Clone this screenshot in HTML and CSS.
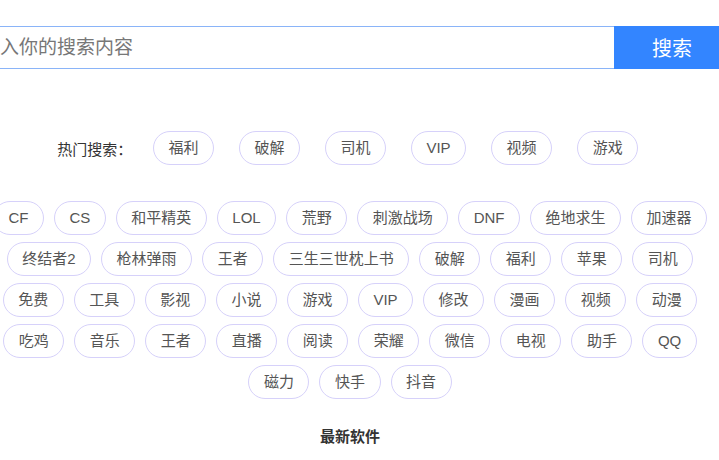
FILE: index.html
```html
<!DOCTYPE html>
<html lang="zh-CN">
<head>
    <meta charset="UTF-8">
    <meta name="viewport" content="width=device-width, initial-scale=1.0">
    <title>搜索</title>
    <link rel="stylesheet" href="styles.css">
</head>
<body>
    <div class="page">
        <form class="search" onsubmit="return false">
            <input type="text" class="search-input" placeholder="请输入你的搜索内容">
            <button type="submit" class="search-btn">搜索</button>
        </form>

        <div class="hot">
            <span class="hot-label">热门搜索：</span>
            <a class="tag hot-tag">福利</a>
            <a class="tag hot-tag">破解</a>
            <a class="tag hot-tag">司机</a>
            <a class="tag hot-tag">VIP</a>
            <a class="tag hot-tag">视频</a>
            <a class="tag hot-tag">游戏</a>
        </div>

        <div class="tags">
            <a class="tag">CF</a>
            <a class="tag">CS</a>
            <a class="tag">和平精英</a>
            <a class="tag">LOL</a>
            <a class="tag">荒野</a>
            <a class="tag">刺激战场</a>
            <a class="tag">DNF</a>
            <a class="tag">绝地求生</a>
            <a class="tag">加速器</a>
            <a class="tag">终结者2</a>
            <a class="tag">枪林弹雨</a>
            <a class="tag">王者</a>
            <a class="tag">三生三世枕上书</a>
            <a class="tag">破解</a>
            <a class="tag">福利</a>
            <a class="tag">苹果</a>
            <a class="tag">司机</a>
            <a class="tag">免费</a>
            <a class="tag">工具</a>
            <a class="tag">影视</a>
            <a class="tag">小说</a>
            <a class="tag">游戏</a>
            <a class="tag">VIP</a>
            <a class="tag">修改</a>
            <a class="tag">漫画</a>
            <a class="tag">视频</a>
            <a class="tag">动漫</a>
            <a class="tag">吃鸡</a>
            <a class="tag">音乐</a>
            <a class="tag">王者</a>
            <a class="tag">直播</a>
            <a class="tag">阅读</a>
            <a class="tag">荣耀</a>
            <a class="tag">微信</a>
            <a class="tag">电视</a>
            <a class="tag">助手</a>
            <a class="tag">QQ</a>
            <a class="tag">磁力</a>
            <a class="tag">快手</a>
            <a class="tag">抖音</a>
        </div>

        <h3 class="section-title">最新软件</h3>
    </div>
</body>
</html>
```

FILE: styles.css
```css
body {
    margin: 0;
    overflow: hidden;
    background-color: #fff;
    font-family: "Liberation Sans", "Noto Sans CJK SC", sans-serif;
    color: #333;
}
.page {
    width: 700px;
    display: flex;
    flex-direction: column;
    align-items: center;
}

/* search bar is wider than the window */
.search {
    display: flex;
    width: 782px;
    height: 43px;
    margin: 26px 22px 0 0;
}
.search-input {
    flex: 1;
    box-sizing: border-box;
    height: 43px;
    padding: 0 13px;
    border: 1px solid #8ab4f8;
    border-right: none;
    outline: none;
    font-family: inherit;
    font-size: 19px;
    color: #333;
}
.search-input::placeholder {
    color: #777;
}
.search-btn {
    width: 116px;
    height: 43px;
    border: none;
    background-color: #3385ff;
    color: #fff;
    font-family: inherit;
    font-size: 20px;
    cursor: pointer;
}

.tag {
    display: inline-block;
    box-sizing: border-box;
    height: 34px;
    line-height: 32px;
    padding: 0 14.5px;
    border: 1px solid #d6d1fa;
    border-radius: 17px;
    font-size: 15px;
    color: #555;
    white-space: nowrap;
    cursor: pointer;
}

.hot {
    display: flex;
    align-items: center;
    margin: 62px 0 0 8px;
}
.hot-label {
    font-size: 15px;
    color: #333;
    margin-right: 8px;
}
.hot-tag {
    margin: 0 12.5px;
}

.tags {
    width: 730px;
    display: flex;
    flex-wrap: wrap;
    justify-content: center;
    column-gap: 10px;
    row-gap: 7px;
    margin-top: 36px;
}

.section-title {
    margin: 28px 0 0;
    font-size: 15px;
    line-height: 20px;
    font-weight: bold;
    color: #333;
}
```
